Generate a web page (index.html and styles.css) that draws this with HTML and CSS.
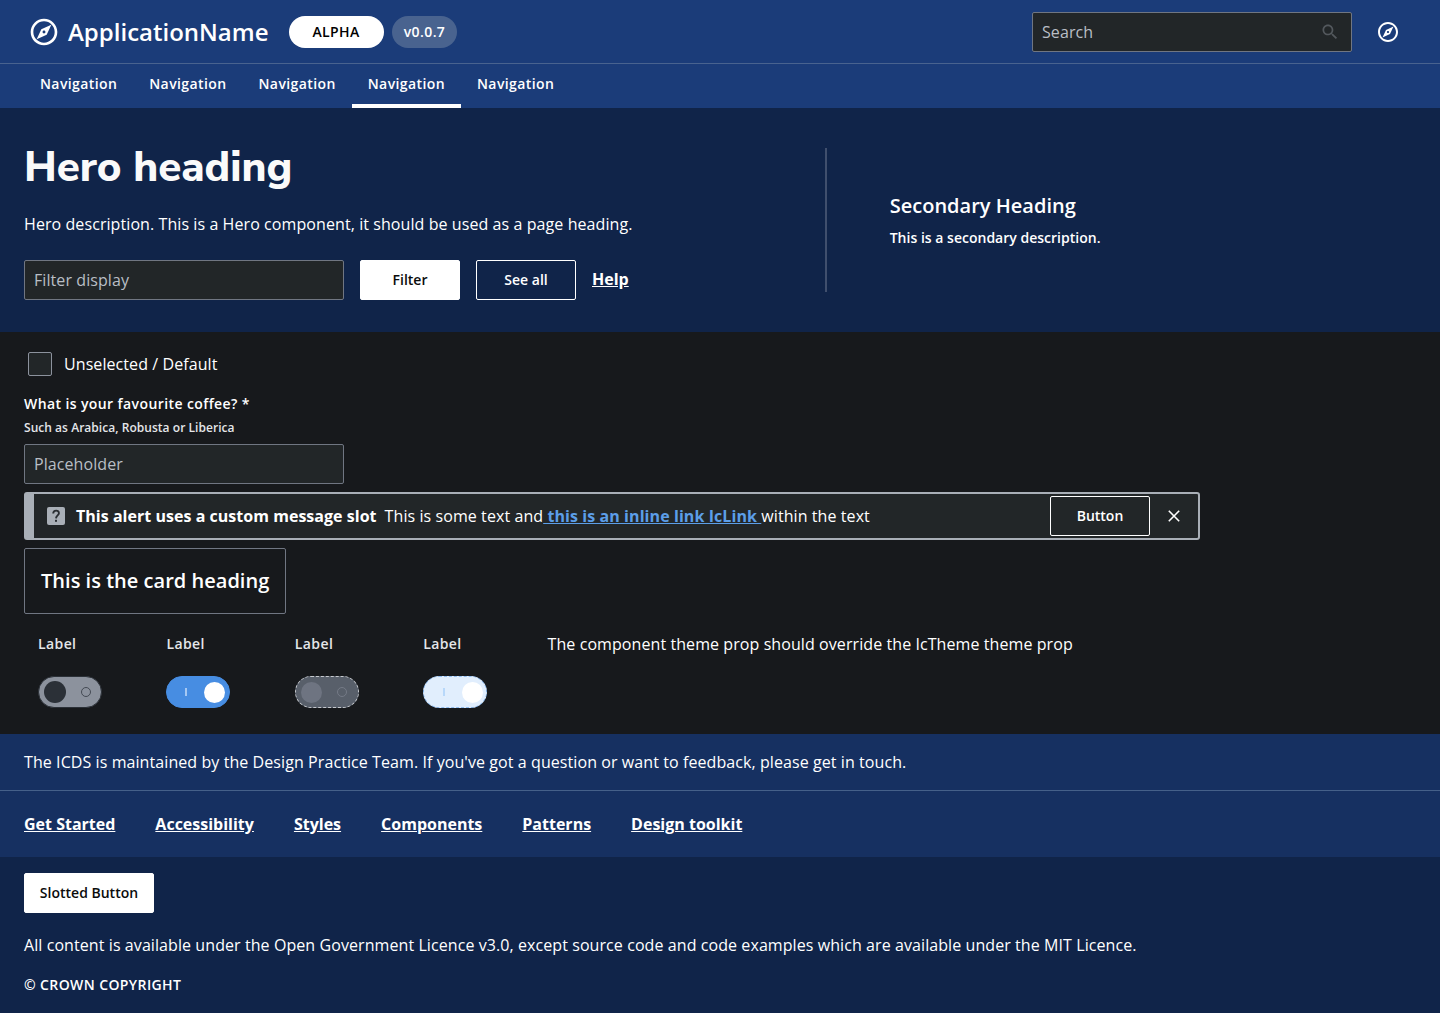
FILE: index.html
```html
<!DOCTYPE html>
<html lang="en">
<head>
<meta charset="utf-8">
<title>ApplicationName</title>
<link rel="stylesheet" href="styles.css">
</head>
<body>
<svg class="sprite" width="0" height="0" aria-hidden="true">
  <symbol id="compass" viewBox="0 0 24 24"><path fill="currentColor" fill-rule="evenodd" d="M12 2C6.480 2 2 6.480 2 12s4.480 10 10 10 10-4.480 10-10S17.520 2 12 2zm0 18c-4.410 0-8-3.590-8-8s3.590-8 8-8 8 3.590 8 8-3.590 8-8 8zM6.500 17.500l7.510-3.490L17.500 6.500 9.990 9.990 6.500 17.500zm5.500-6.600c.61 0 1.100.49 1.100 1.100s-.49 1.100-1.100 1.100-1.100-.49-1.100-1.100.49-1.100 1.100-1.100z"/></symbol>
</svg>
<header class="top">
  <div class="bar">
    <svg class="logo"><use href="#compass"/></svg>
    <span class="app-name">ApplicationName</span>
    <span class="chip chip-status">ALPHA</span>
    <span class="chip chip-version">v0.0.7</span>
    <div class="field search"><span>Search</span>
      <svg width="20" height="20" viewBox="0 0 24 24"><path fill="currentColor" d="M15.500 14h-.79l-.28-.27C15.410 12.590 16 11.110 16 9.500 16 5.910 13.090 3 9.500 3S3 5.910 3 9.500 5.910 16 9.500 16c1.610 0 3.090-.59 4.230-1.570l.27.28v.79l5 4.990L20.490 19l-4.990-5zm-6 0C7.010 14 5 11.990 5 9.500S7.010 5 9.500 5 14 7.010 14 9.500 11.990 14 9.500 14z"/></svg>
    </div>
    <svg class="action"><use href="#compass"/></svg>
  </div>
  <nav class="tabs">
    <a>Navigation</a><a>Navigation</a><a>Navigation</a><a class="selected">Navigation</a><a>Navigation</a>
  </nav>
</header>
<section class="hero">
  <div class="hero-main">
    <h1>Hero heading</h1>
    <p>Hero description. This is a Hero component, it should be used as a page heading.</p>
    <div class="hero-actions">
      <div class="field">Filter display</div>
      <button class="btn solid">Filter</button>
      <button class="btn outline">See all</button>
      <a class="link">Help</a>
    </div>
  </div>
  <div class="hero-side">
    <h2>Secondary Heading</h2>
    <p>This is a secondary description.</p>
  </div>
</section>
<main>
  <label class="check"><span class="box"></span>Unselected / Default</label>
  <div class="question">What is your favourite coffee? *</div>
  <div class="helper">Such as Arabica, Robusta or Liberica</div>
  <div class="field">Placeholder</div>
  <div class="alert">
    <svg class="alert-icon" width="18" height="18" viewBox="0 0 18 18"><rect width="18" height="18" rx="2" fill="#a9afb7"/><path d="M6.200 6.500C6.300 2.600 12.200 2.800 11.900 6.300 11.700 8.400 9.100 8.500 9 11.400" fill="none" stroke="#2a2e33" stroke-width="1.900"/><rect x="8" y="12.800" width="2" height="2" fill="#2a2e33"/></svg>
    <strong>This alert uses a custom message slot</strong>
    <span class="message">This is some text and<a> this is an inline link IcLink </a>within the text</span>
    <button class="btn outline">Button</button>
    <svg class="close" width="12" height="12" viewBox="0 0 12 12"><path d="M.8.8l10.400 10.400M11.200.8L.8 11.200" stroke="#fff" stroke-width="1.600"/></svg>
  </div>
  <div class="card">This is the card heading</div>
  <div class="switches">
    <div class="switch"><span>Label</span><i class="track off"><b class="knob"></b><b class="ring"></b></i></div>
    <div class="switch"><span>Label</span><i class="track on"><b class="tick"></b><b class="knob"></b></i></div>
    <div class="switch"><span>Label</span><i class="track off disabled"><b class="knob"></b><b class="ring"></b></i></div>
    <div class="switch"><span>Label</span><i class="track on disabled"><b class="tick"></b><b class="knob"></b></i></div>
    <p>The component theme prop should override the IcTheme theme prop</p>
  </div>
</main>
<footer>
  <p class="about">The ICDS is maintained by the Design Practice Team. If you've got a question or want to feedback, please get in touch.</p>
  <nav class="links"><a class="link">Get Started</a><a class="link">Accessibility</a><a class="link">Styles</a><a class="link">Components</a><a class="link">Patterns</a><a class="link">Design toolkit</a></nav>
  <div class="legal">
    <button class="btn solid slotted">Slotted Button</button>
    <p>All content is available under the Open Government Licence v3.0, except source code and code examples which are available under the MIT Licence.</p>
    <small>© CROWN COPYRIGHT</small>
  </div>
</footer>
</body>
</html>
```
FILE: styles.css
```css
* { box-sizing: border-box; }
body {
  margin: 0;
  background: #17191c;
  color: #fff;
  font: 400 16px/24px "Open Sans", sans-serif;
  letter-spacing: .08px;
}
h1, h2, p { margin: 0; }
.sprite { display: block; height: 0; }
svg { flex: none; }

.top { background: #1b3c79; }
.bar {
  display: flex;
  align-items: center;
  height: 64px;
  padding: 0 40px 0 28px;
  border-bottom: 1px solid #49638f;
}
.logo { width: 32px; height: 32px; margin-right: 8px; }
.app-name { font-size: 24px; font-weight: 600; line-height: 32px; width: 221px; white-space: nowrap; letter-spacing: 0; }
.chip {
  height: 32px;
  border-radius: 16px;
  font-size: 14px;
  font-weight: 600;
  line-height: 32px;
  text-align: center;
}
.chip-status { width: 95px; padding-right: 1px; background: #fff; color: #000; letter-spacing: .4px; margin-right: 8px; }
.chip-version { width: 65px; background: #49638f; letter-spacing: .4px; }
.field {
  display: flex;
  align-items: center;
  width: 320px;
  height: 40px;
  padding: 0 9px;
  border: 1px solid #707682;
  border-radius: 2px;
  background: #222628;
  color: #b9bec5;
}
.search { margin-left: auto; justify-content: space-between; padding-right: 11px; }
.search svg { color: #53585d; }
.action { width: 24px; height: 24px; margin-left: 24px; }

.tabs { display: flex; height: 44px; padding-left: 24px; }
.tabs a {
  width: 109.25px;
  padding: 8px 0 0 16px;
  font-size: 14px;
  font-weight: 600;
  letter-spacing: .4px;
}
.tabs .selected { border-bottom: 4px solid #fff; }

.hero { display: flex; height: 224px; padding: 40px 24px; background: #102449; }
.hero-main { width: 801px; }
h1 {
  margin-top: -4px;
  color: #fafafa;
  font-family: "Nunito Sans", Lato, sans-serif;
  font-size: 42px;
  font-weight: 800;
  line-height: 48px;
  letter-spacing: 0;
}
.hero-main p { margin-top: 20px; }
.hero-actions { display: flex; gap: 16px; margin-top: 24px; }
.hero-side {
  height: 144px;
  padding: 42px 0 0 62.700px;
  border-left: 2px solid #404f6d;
  letter-spacing: .01px;
}
.hero-side h2 { font-size: 20px; font-weight: 600; line-height: 32px; }
.hero-side p { font-size: 14px; font-weight: 600; line-height: 24px; margin-top: 4px; }
.btn {
  width: 100px;
  height: 40px;
  padding: 0;
  border: 1px solid #fff;
  border-radius: 2px;
  font: 600 14px/24px "Open Sans", sans-serif;
}
.solid { background: #fff; color: #0b0c0c; }
.outline { background: transparent; color: #fff; }
.link { font-weight: 700; text-decoration: underline; letter-spacing: 0; }
.hero-actions .link { padding-top: 7px; }

main { height: 402px; padding: 16px 24px 0; }
.check { display: flex; align-items: center; gap: 12px; height: 32px; padding-left: 4px; }
.box { width: 24px; height: 24px; border: 1px solid #8c929d; border-radius: 2px; background: #222628; }
.question { font-size: 14px; font-weight: 600; letter-spacing: .4px; margin-top: 12px; }
.helper { font-size: 12px; font-weight: 600; color: #e4e6e9; margin-bottom: 4px; height: 24px; letter-spacing: .04px; }
.alert {
  display: flex;
  align-items: center;
  width: 1176px;
  height: 48px;
  margin-top: 8px;
  padding-left: 13px;
  border: 2px solid #a9afb7;
  border-left-width: 10px;
  border-radius: 3px;
  background: #222628;
}
.alert strong { margin: 0 8px 0 11px; letter-spacing: .03px; }
.message a { color: #5c9ee8; font-weight: 700; text-decoration: underline; white-space: pre-wrap; }
.alert .btn { margin-left: auto; }
.close { margin: 0 18px; }
.card {
  width: 262px;
  height: 66px;
  margin-top: 8px;
  padding: 16px;
  border: 1px solid #707682;
  border-radius: 2px;
  font-size: 20px;
  font-weight: 600;
  line-height: 32px;
  letter-spacing: .02px;
  white-space: nowrap;
}
.switches { display: flex; margin-top: 18px; padding-left: 14px; }
.switch { width: 128.400px; font-size: 14px; font-weight: 600; letter-spacing: .4px; color: #e4e6e9; }
.switch + p { margin-left: -4px; }
.track {
  display: flex;
  align-items: center;
  justify-content: space-between;
  width: 64px;
  height: 32px;
  margin-top: 20px;
  border: 1px solid transparent;
  border-radius: 16px;
}
.track.off { padding: 0 10px 0 5px; background: #8c929d; border-color: #2b3037; }
.track.on { padding: 0 4px 0 18px; background: #478de2; border-color: #478de2; }
.knob { width: 22px; height: 22px; border-radius: 50%; background: #2b3037; }
.on .knob { width: 21px; height: 21px; background: #fff; }
.ring { width: 10px; height: 10px; border: 1px solid #444a54; border-radius: 50%; }
.tick { width: 2px; height: 8px; background: #a5c8f3; }
.track.off.disabled { padding-right: 11px; background: #585f6a; border: 1px dashed #c5c8cd; }
.off.disabled .knob { width: 21px; height: 21px; background: #6e7481; }
.off.disabled .ring { border-color: #747a86; }
.track.on.disabled { padding: 0 3px 0 19px; background: #e1eefd; border: 1px dashed #8fbcf0; }
.on.disabled .tick { background: #b8d8fa; }

footer { background: #163061; }
.about { padding: 16px 24px; height: 57px; border-bottom: 1px solid #456089; }
.links { display: flex; gap: 40px; padding: 21px 24px; height: 66px; }
.legal { height: 156px; padding: 16px 24px; background: #102449; }
.slotted { display: block; width: 130px; }
.legal p { margin-top: 20px; }
.legal small { display: block; margin-top: 16px; font-size: 14px; font-weight: 600; letter-spacing: .4px; }
```
